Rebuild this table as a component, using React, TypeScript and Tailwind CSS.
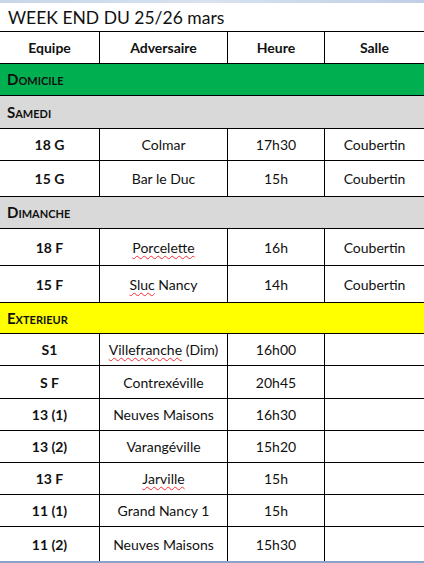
import React from 'react';

type Match = { team: string; opponent: string; time: string; hall?: string; spell?: string; h: string };
type Row =
  | { kind: 'section'; label: string; bg: string; h: string }
  | ({ kind: 'match' } & Match);

const ROWS: Row[] = [
  { kind: 'section', label: 'Domicile', bg: 'bg-[#00b050]', h: 'h-[32px]' },
  { kind: 'section', label: 'Samedi', bg: 'bg-[#d9d9d9]', h: 'h-[33px]' },
  { kind: 'match', team: '18 G', opponent: 'Colmar', time: '17h30', hall: 'Coubertin', h: 'h-[32px]' },
  { kind: 'match', team: '15 G', opponent: 'Bar le Duc', time: '15h', hall: 'Coubertin', h: 'h-[36px]' },
  { kind: 'section', label: 'Dimanche', bg: 'bg-[#d9d9d9]', h: 'h-[32px]' },
  { kind: 'match', team: '18 F', opponent: 'Porcelette', spell: 'Porcelette', time: '16h', hall: 'Coubertin', h: 'h-[37px]' },
  { kind: 'match', team: '15 F', opponent: ' Nancy', spell: 'Sluc', time: '14h', hall: 'Coubertin', h: 'h-[37px]' },
  { kind: 'section', label: 'Exterieur', bg: 'bg-[#ffff00]', h: 'h-[31px]' },
  { kind: 'match', team: 'S1', opponent: ' (Dim)', spell: 'Villefranche', time: '16h00', h: 'h-[32px]' },
  { kind: 'match', team: 'S F', opponent: 'Contrexéville', time: '20h45', h: 'h-[33px]' },
  { kind: 'match', team: '13 (1)', opponent: 'Neuves Maisons', time: '16h30', h: 'h-[32px]' },
  { kind: 'match', team: '13 (2)', opponent: 'Varangéville', time: '15h20', h: 'h-[32px]' },
  { kind: 'match', team: '13 F', opponent: '', spell: 'Jarville', time: '15h', h: 'h-[32px]' },
  { kind: 'match', team: '11 (1)', opponent: 'Grand Nancy 1', time: '15h', h: 'h-[32px]' },
  { kind: 'match', team: '11 (2)', opponent: 'Neuves Maisons', time: '15h30', h: 'h-[34px]' },
];

const COLS = 'grid grid-cols-[100px_128px_97px_99px]';

function Cell({ children, last, bold }: { children?: React.ReactNode; last?: boolean; bold?: boolean }) {
  return (
    <div
      className={`flex items-center justify-center ${last ? '' : 'border-r border-black'} ${bold ? 'font-bold' : ''}`}
    >
      {children}
    </div>
  );
}

function Opponent({ row }: { row: Match }) {
  if (row.spell && row.opponent === row.spell) {
    return <span className="underline decoration-wavy decoration-red-500 decoration-1 underline-offset-2">{row.spell}</span>;
  }
  return (
    <span className="whitespace-pre">
      {row.spell && (
        <span className="underline decoration-wavy decoration-red-500 decoration-1 underline-offset-2">{row.spell}</span>
      )}
      {row.opponent}
    </span>
  );
}

export default function App() {
  return (
    <div className="w-[424px] h-[563px] overflow-hidden bg-white text-[14px] text-[#111] font-['Lato',sans-serif]">
      <div className="h-[3px] bg-gradient-to-r from-[#c9d6ea] via-[#d8e2f0] to-[#c0cfe6]" />
      <div className="h-[29px] border-b border-black px-[8px] flex items-center text-[17.5px] leading-none pt-[1px]">
        WEEK END DU 25/26 mars
      </div>
      <div className={`${COLS} h-[32px] border-b border-black font-bold`}>
        <Cell>Equipe</Cell>
        <Cell>Adversaire</Cell>
        <Cell>Heure</Cell>
        <Cell last>Salle</Cell>
      </div>
      {ROWS.map((row, i) =>
        row.kind === 'section' ? (
          <div
            key={i}
            className={`${row.h} ${row.bg} border-b border-black flex items-center px-[7px] font-bold [font-variant:small-caps] text-[15px]`}
          >
            {row.label}
          </div>
        ) : (
          <div key={i} className={`${COLS} ${row.h} ${i === ROWS.length - 1 ? '' : 'border-b border-black'}`}>
            <Cell bold>{row.team}</Cell>
            <Cell>
              <Opponent row={row} />
            </Cell>
            <Cell>{row.time}</Cell>
            <Cell last>{row.hall}</Cell>
          </div>
        ),
      )}
      <div className="h-[2px] bg-[#8da2c9]" />
    </div>
  );
}
